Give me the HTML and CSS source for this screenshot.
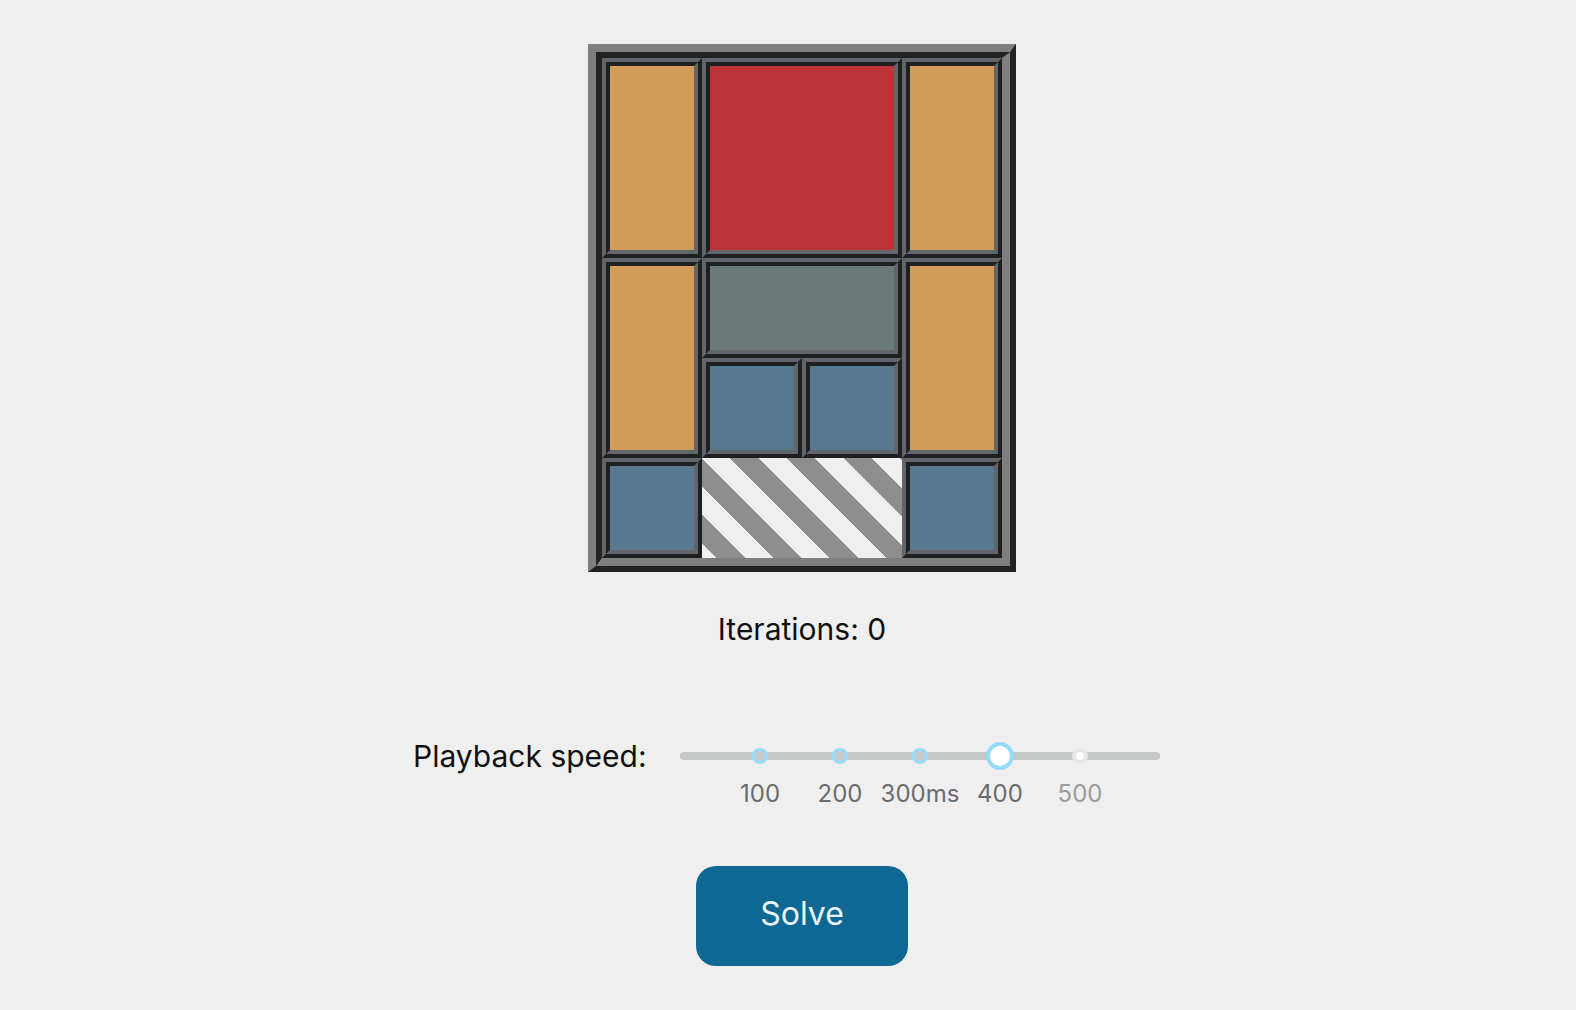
FILE: index.html
```html
<!DOCTYPE html>
<html lang="en">
<head>
<meta charset="utf-8">
<title>Klotski Solver</title>
<link rel="stylesheet" href="styles.css">
</head>
<body>
<div class="app">
  <div class="board">
    <div class="board-inner">
      <div class="piece tan pos-a"><div class="fill"></div></div>
      <div class="piece red pos-b"><div class="fill"></div></div>
      <div class="piece tan pos-c"><div class="fill"></div></div>
      <div class="piece tan pos-d"><div class="fill"></div></div>
      <div class="piece grey pos-e"><div class="fill"></div></div>
      <div class="piece tan pos-f"><div class="fill"></div></div>
      <div class="piece blue pos-g"><div class="fill"></div></div>
      <div class="piece blue pos-h"><div class="fill"></div></div>
      <div class="piece blue pos-i"><div class="fill"></div></div>
      <div class="exit pos-j"></div>
      <div class="piece blue pos-k"><div class="fill"></div></div>
    </div>
  </div>

  <div class="iterations">Iterations: 0</div>

  <div class="speed">
    <div class="speed-label">Playback speed:</div>
    <div class="slider">
      <div class="rail-wrap">
        <div class="rail"></div>
        <span class="dot" style="left:16.6667%"></span>
        <span class="dot" style="left:33.3333%"></span>
        <span class="dot" style="left:50%"></span>
        <span class="dot" style="left:66.6667%"></span>
        <span class="dot dot-off" style="left:83.3333%"></span>
        <span class="handle" style="left:66.6667%"></span>
      </div>
      <div class="marks">
        <span class="mark" style="left:16.6667%">100</span>
        <span class="mark" style="left:33.3333%">200</span>
        <span class="mark" style="left:50%">300ms</span>
        <span class="mark" style="left:66.6667%">400</span>
        <span class="mark mark-off" style="left:83.3333%">500</span>
      </div>
    </div>
  </div>

  <button class="solve" type="button">Solve</button>
</div>
</body>
</html>
```

FILE: styles.css
```css
* {
  box-sizing: border-box;
}

html, body {
  margin: 0;
  padding: 0;
  background: #efefef;
}

body {
  font-family: Inter, "Liberation Sans", sans-serif;
  color: #111;
}

.app {
  display: flex;
  flex-direction: column;
  align-items: center;
  padding-top: 44px;
  padding-left: 28px;
}

/* ---------- board ---------- */
.board {
  border-style: solid;
  border-width: 8px 6px 6px 8px;
  border-color: #7f7f7f #222222 #222222 #7f7f7f;
}

.board-inner {
  display: grid;
  grid-template-columns: repeat(4, 100px);
  grid-template-rows: repeat(5, 100px);
  border-style: solid;
  border-width: 6px 8px 8px 6px;
  border-color: #222222 #7f7f7f #7f7f7f #222222;
}

.piece {
  border: 4px solid;
  border-color: #62666c #1e1f20 #1e1f20 #62666c;
}

.fill {
  height: 100%;
  border: 4px solid;
  border-color: #1e1f20 #62666c #62666c #1e1f20;
}

.tan .fill { background: #d29e57; }
.red .fill { background: #bc3437; }
.grey .fill { background: #6c7b7a; }
.blue .fill { background: #597a8e; }

.pos-a { grid-column: 1; grid-row: 1 / 3; }
.pos-b { grid-column: 2 / 4; grid-row: 1 / 3; }
.pos-c { grid-column: 4; grid-row: 1 / 3; }
.pos-d { grid-column: 1; grid-row: 3 / 5; }
.pos-e { grid-column: 2 / 4; grid-row: 3; }
.pos-f { grid-column: 4; grid-row: 3 / 5; }
.pos-g { grid-column: 2; grid-row: 4; }
.pos-h { grid-column: 3; grid-row: 4; }
.pos-i { grid-column: 1; grid-row: 5; }
.pos-j { grid-column: 2 / 4; grid-row: 5; }
.pos-k { grid-column: 4; grid-row: 5; }

.exit {
  background: repeating-linear-gradient(45deg,
    #efefef 0 10.5px,
    #8e8e8e 10.5px 30.5px,
    #efefef 30.5px 40px);
}

/* ---------- iterations ---------- */
.iterations {
  margin-top: 39px;
  font-size: 30px;
  line-height: 36px;
}

/* ---------- speed slider ---------- */
.speed {
  margin-top: 91px;
  display: grid;
  grid-template-columns: 267px 480px;
  padding-right: 31px;
  align-items: start;
}

.speed-label {
  font-size: 30px;
  line-height: 36px;
  white-space: nowrap;
}

.slider {
  padding-top: 4px;
}

.rail-wrap {
  position: relative;
  height: 28px;
  padding-top: 10px;
}

.rail {
  height: 8px;
  border-radius: 4px;
  background: #c6c9c7;
}

.dot {
  position: absolute;
  top: 50%;
  width: 16px;
  height: 16px;
  margin-left: -8px;
  margin-top: -8px;
  border-radius: 50%;
  border: 3px solid #96dbfa;
  background: #c6c9c7;
}

.dot-off {
  border: 4px solid #e6e6e6;
  background: #ffffff;
}

.handle {
  position: absolute;
  top: 50%;
  width: 28px;
  height: 28px;
  margin-left: -14px;
  margin-top: -14px;
  border-radius: 50%;
  border: 4px solid #96dbfa;
  background: #ffffff;
}

.marks {
  position: relative;
  height: 30px;
  margin-top: 9px;
}

.mark {
  position: absolute;
  top: 0;
  transform: translateX(-50%);
  font-size: 24px;
  line-height: 30px;
  color: #6b6b6b;
  white-space: nowrap;
}

.mark-off {
  color: #9b9b9b;
}

/* ---------- button ---------- */
.solve {
  margin-top: 57px;
  width: 212px;
  height: 100px;
  padding: 0 0 5px;
  border: none;
  border-radius: 20px;
  background: #0e6893;
  color: #eaf5fb;
  font-family: Inter, "Liberation Sans", sans-serif;
  font-size: 32px;
  cursor: pointer;
}
```
